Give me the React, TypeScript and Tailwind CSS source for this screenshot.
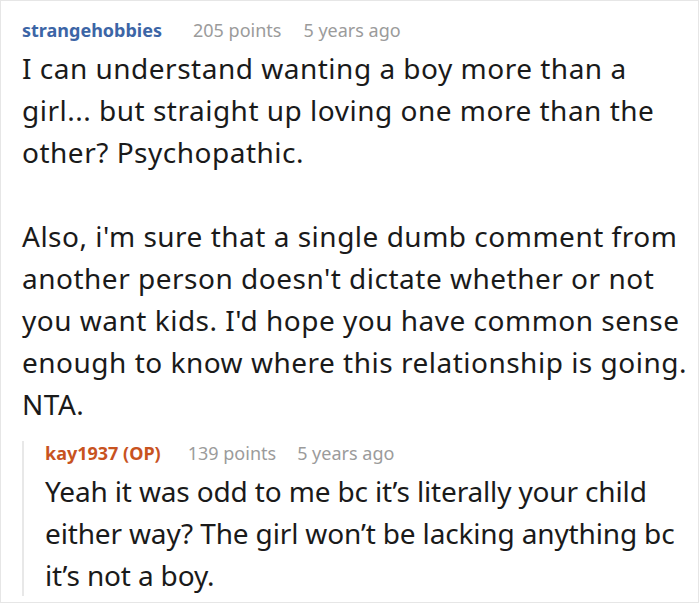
export default function App() {
  return (
    <div className="h-[604px] w-[700px] bg-white" style={{ fontFamily: '"Noto Sans", "Open Sans", sans-serif' }}>
      <div className="h-[603px] w-[699px] border border-[#e6e6e6] pl-[21px] pt-[17px]">
        <div className="flex items-center text-[18px] leading-[24px]">
          <span className="font-bold text-[#3c65a6]">strangehobbies</span>
          <span className="ml-[31px] text-[#9b9b9b]">205 points</span>
          <span className="ml-[22px] text-[#9b9b9b]">5 years ago</span>
        </div>
        <div className="mt-[5px] whitespace-nowrap text-[28px] leading-[42px] tracking-[0.5px] text-[#1a1a1a]">
          <p>
            I can understand wanting a boy more than a<br />
            girl... but straight up loving one more than the<br />
            other? Psychopathic.
          </p>
          <p className="mt-[42px]">
            Also, i'm sure that a single dumb comment from<br />
            another person doesn't dictate whether or not<br />
            you want kids. I'd hope you have common sense<br />
            enough to know where this relationship is going.<br />
            NTA.
          </p>
        </div>
        <div className="mt-[16px] border-l-2 border-[#e8e8e8] pl-[21px]">
          <div className="flex items-center text-[18px] leading-[24px]">
            <span className="font-bold text-[#c8531f]">kay1937 (OP)</span>
            <span className="ml-[27px] text-[#9b9b9b]">139 points</span>
            <span className="ml-[21px] text-[#9b9b9b]">5 years ago</span>
          </div>
          <div className="mt-[5px] whitespace-nowrap text-[28px] leading-[42px] tracking-[-0.15px] text-[#1a1a1a]">
            <p>
              Yeah it was odd to me bc it’s literally your child<br />
              either way? The girl won’t be lacking anything bc<br />
              it’s not a boy.
            </p>
          </div>
        </div>
      </div>
    </div>
  );
}
